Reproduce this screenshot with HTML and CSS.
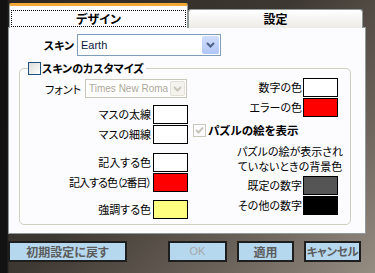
FILE: index.html
```html
<!DOCTYPE html>
<html lang="ja">
<head>
    <meta charset="UTF-8">
    <title>オプション</title>
    <link rel="stylesheet" href="styles.css">
</head>
<body>
    <div class="dialog">
        <div class="tabs">
            <div class="tab tab-active"><span class="tab-focus">デザイン</span></div>
            <div class="tab">設定</div>
        </div>

        <div class="panel">
            <div class="skin-row">
                <span class="label-bold">スキン</span>
                <div class="select select-skin">
                    <span class="select-text">Earth</span>
                    <span class="select-arrow">
                        <svg width="9" height="6" viewBox="0 0 9 6"><path d="M1 1 L4.5 4.5 L8 1" fill="none" stroke="#4d6185" stroke-width="2"/></svg>
                    </span>
                </div>
            </div>

            <div class="group">
                <div class="group-legend">
                    <span class="checkbox"></span>
                    <span class="label-bold">スキンのカスタマイズ</span>
                </div>

                <div class="group-body">
                    <!-- left column -->
                    <div class="col col-left">
                        <div class="row row-font">
                            <span class="label">フォント</span>
                            <div class="select select-font">
                                <span class="select-text">Times New Roma</span>
                                <span class="select-arrow select-arrow-off">
                                    <svg width="9" height="6" viewBox="0 0 9 6"><path d="M1 1 L4.5 4.5 L8 1" fill="none" stroke="#c9c7ba" stroke-width="2"/></svg>
                                </span>
                            </div>
                        </div>
                        <div class="row gap-6"><span class="label">マスの太線</span><span class="swatch"></span></div>
                        <div class="row"><span class="label">マスの細線</span><span class="swatch"></span></div>
                        <div class="row gap-8"><span class="label">記入する色</span><span class="swatch"></span></div>
                        <div class="row"><span class="label label-tight">記入する色（2番目）</span><span class="swatch swatch-red"></span></div>
                        <div class="row gap-7"><span class="label">強調する色</span><span class="swatch swatch-yellow"></span></div>
                    </div>

                    <!-- right column -->
                    <div class="col col-right">
                        <div class="row"><span class="label">数字の色</span><span class="swatch"></span></div>
                        <div class="row"><span class="label">エラーの色</span><span class="swatch swatch-red"></span></div>
                        <div class="check-row">
                            <span class="checkbox checkbox-off">
                                <svg width="9" height="9" viewBox="0 0 9 9"><path d="M1 4 L3.5 6.5 L8 1.5" fill="none" stroke="#c9c7ba" stroke-width="2"/></svg>
                            </span>
                            <span class="label-bold">パズルの絵を表示</span>
                        </div>
                        <div class="note">パズルの絵が表示され<br>ていないときの背景色</div>
                        <div class="row gap-1"><span class="label">既定の数字</span><span class="swatch swatch-gray"></span></div>
                        <div class="row"><span class="label">その他の数字</span><span class="swatch swatch-black"></span></div>
                    </div>
                </div>
            </div>
        </div>

        <div class="buttons">
            <button class="btn btn-reset">初期設定に戻す</button>
            <div class="btn-group">
                <button class="btn btn-ok">OK</button>
                <button class="btn">適用</button>
                <button class="btn btn-cancel">キャンセル</button>
            </div>
        </div>
    </div>
</body>
</html>
```

FILE: styles.css
```css
* {
    margin: 0;
    padding: 0;
    box-sizing: border-box;
}

body {
    width: 375px;
    height: 273px;
    overflow: hidden;
    font-family: "Noto Sans CJK JP", "Noto Sans", sans-serif;
    font-size: 11px;
    font-feature-settings: "palt";
    color: #000;
    background:
        linear-gradient(to right, #121212 0, #121212 7px, rgba(0, 0, 0, 0) 9px),
        linear-gradient(135deg, #2b2621 0%, #3e3832 45%, #6b635a 75%, #958c82 100%);
}

.dialog {
    padding: 3px 9px 0 8px;
}

/* Tabs */
.tabs {
    display: flex;
    align-items: flex-end;
    height: 25px;
    margin-left: 1px;
    position: relative;
    z-index: 1;
}

.tab {
    width: 175px;
    height: 19px;
    border: 1px solid #919b9c;
    border-bottom: none;
    border-radius: 3px 3px 0 0;
    background: linear-gradient(#ffffff, #ecebe6);
    font-size: 12px;
    font-weight: 700;
    line-height: 18px;
    text-align: center;
}

.tab-active {
    width: 179px;
    height: 25px;
    padding: 4px 1px 0 1px;
    border-top: 3px solid #f4a937;
    border-radius: 2px 2px 0 0;
    background: #fcfcfe;
}

.tab-focus {
    display: block;
    height: 17px;
    border: 1px dotted #000;
    line-height: 15px;
}

/* Panel */
.panel {
    height: 207px;
    margin-top: -1px;
    border: 1px solid #919b9c;
    background: #fcfcfe;
}

.label-bold {
    font-weight: 700;
    white-space: nowrap;
}

.skin-row {
    display: flex;
    align-items: center;
    justify-content: flex-end;
    gap: 3px;
    width: 212px;
    margin-top: 6px;
}

.select {
    display: flex;
    align-items: center;
    justify-content: space-between;
    border: 1px solid #7f9db9;
    background: #fff;
    font-family: "Liberation Sans", Arial, sans-serif;
    font-size: 11px;
    white-space: nowrap;
    overflow: hidden;
}

.select-skin {
    width: 144px;
    height: 22px;
    padding: 1px 1px 1px 3px;
    color: #0b1a3e;
}

.select-arrow {
    display: flex;
    flex-shrink: 0;
    align-items: center;
    justify-content: center;
    width: 17px;
    height: 18px;
    border-radius: 2px;
    background: linear-gradient(#d0ddfc, #b1c6f7);
}

.select-font {
    width: 102px;
    height: 19px;
    padding: 1px 1px 1px 3px;
    border-color: #c9c7ba;
    color: #aca899;
    font-size: 10px;
}

.select-font .select-text {
    overflow: hidden;
}

.select-arrow-off {
    height: 15px;
    width: 15px;
    background: #f4f3ee;
    border: 1px solid #e2e0d4;
}

/* Group box */
.group {
    position: relative;
    width: 332px;
    height: 157px;
    margin: 12px 0 0 10px;
    border: 1px solid #d0d0bf;
    border-radius: 5px;
}

.group-legend {
    position: absolute;
    top: -8px;
    left: 8px;
    display: flex;
    align-items: center;
    gap: 1px;
    padding-right: 2px;
    background: #fcfcfe;
    line-height: 14px;
}

.checkbox {
    display: inline-flex;
    align-items: center;
    justify-content: center;
    width: 13px;
    height: 13px;
    border: 1px solid #1c5180;
    background: linear-gradient(135deg, #dcdcd7, #ffffff);
}

.checkbox-off {
    border-color: #cac8bb;
    background: #fcfcfe;
}

.group-body {
    display: flex;
}

.col {
    display: flex;
    flex-direction: column;
}

.col-left {
    width: 168px;
    padding-top: 10px;
}

.col-right {
    width: 152px;
    padding: 8px 2px 0 0;
}

.row {
    display: flex;
    align-items: center;
    justify-content: flex-end;
    height: 20px;
}

.col-left .row {
    gap: 2px;
}

.col-right .row {
    gap: 1px;
}

.col-left .row-font {
    height: 19px;
    gap: 4px;
    padding-right: 1px;
}

.gap-1 { margin-top: 1px; }
.gap-6 { margin-top: 6px; }
.gap-7 { margin-top: 7px; }
.gap-8 { margin-top: 8px; }

.label {
    white-space: nowrap;
}

.label-tight {
    letter-spacing: -1px;
}

.swatch {
    flex-shrink: 0;
    width: 35px;
    height: 19px;
    border: 1px solid #000;
    background: #fff;
}

.swatch-red { background: #ff0000; }
.swatch-yellow { background: #ffff80; }
.swatch-gray { background: #555555; }
.swatch-black { background: #000000; }

.check-row {
    display: flex;
    align-items: center;
    gap: 2px;
    height: 16px;
    margin-top: 5px;
    padding-left: 5px;
}

.check-row .label-bold {
    font-size: 11.5px;
}

.note {
    width: 110px;
    margin: 6px 0 0 47px;
    line-height: 15px;
    text-align: center;
    white-space: nowrap;
}

/* Buttons */
.buttons {
    display: flex;
    justify-content: space-between;
    margin-top: 7px;
    padding-right: 5px;
}

.btn-group {
    display: flex;
    gap: 10px;
}

.btn {
    width: 57px;
    height: 21px;
    padding: 0;
    border: 2px solid #1e1e1e;
    background: #b5d8ef;
    color: #5c5c5c;
    font-family: "Noto Sans CJK JP", sans-serif;
    font-feature-settings: "palt";
    font-size: 12px;
    font-weight: 700;
    line-height: 15px;
    white-space: nowrap;
}

.btn-reset {
    width: 119px;
}

.btn-cancel {
    font-size: 11.5px;
    letter-spacing: -0.3px;
}

.btn-ok {
    width: 59px;
    color: #a6a6a6;
    font-weight: 400;
    font-family: "Liberation Sans", Arial, sans-serif;
    font-size: 11px;
}
```
